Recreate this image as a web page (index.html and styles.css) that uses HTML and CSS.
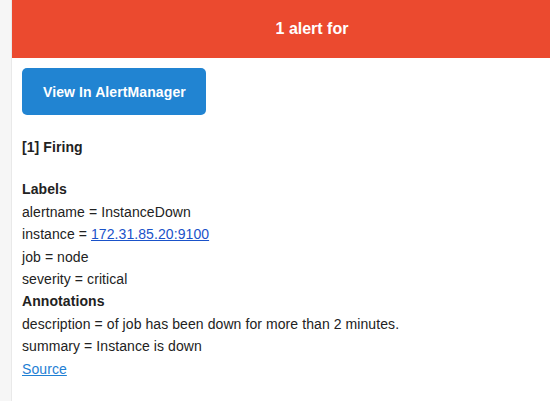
FILE: index.html
```html
<!DOCTYPE html>
<html>
<head>
<meta charset="utf-8">
<link rel="stylesheet" href="styles.css">
</head>
<body>
<div class="wrap">
  <div class="main">
    <div class="alert">1 alert for</div>
    <div class="content-wrap">
      <div class="block"><a href="#" class="btn-primary">View In AlertManager</a></div>
      <div class="block first-text"><strong>[1] Firing</strong></div>
      <div class="block">
        <strong>Labels</strong><br>
        alertname = InstanceDown<br>
        instance = <a href="#" class="auto-link">172.31.85.20:9100</a><br>
        job = node<br>
        severity = critical<br>
        <strong>Annotations</strong><br>
        description = of job has been down for more than 2 minutes.<br>
        summary = Instance is down<br>
        <a href="#" class="source">Source</a><br>
      </div>
    </div>
  </div>
</div>
</body>
</html>
```
FILE: styles.css
```css
html, body {
  margin: 0;
  padding: 0;
  overflow: hidden;
  background: #f6f6f6;
}
body {
  font-family: "Liberation Sans", Arial, Helvetica, sans-serif;
  font-size: 14px;
  color: #222;
  letter-spacing: 0.08px;
}
.wrap {
  padding-left: 11px;
  width: 620px;
}
.main {
  width: 600px;
  background: #fff;
  border-left: 1px solid #e9e9e9;
  min-height: 401px;
}
.alert {
  background: #eb4a2f;
  color: #fff;
  text-align: center;
  font-size: 16px;
  font-weight: bold;
  line-height: 18px;
  padding: 20px;
  letter-spacing: 0;
}
.content-wrap {
  padding: 10px;
  line-height: 22.4px;
}
.block {
  padding-bottom: 20px;
}
.first-text {
  padding-top: 1px;
}
.btn-primary {
  display: inline-block;
  background: #2184d2;
  color: #fff;
  text-decoration: none;
  font-weight: bold;
  line-height: 28px;
  padding: 10px 20px 9px 21px;
  border-radius: 5px;
  letter-spacing: 0.1px;
}
.auto-link {
  color: #1a52c9;
}
.source {
  color: #1f80d4;
}
```
